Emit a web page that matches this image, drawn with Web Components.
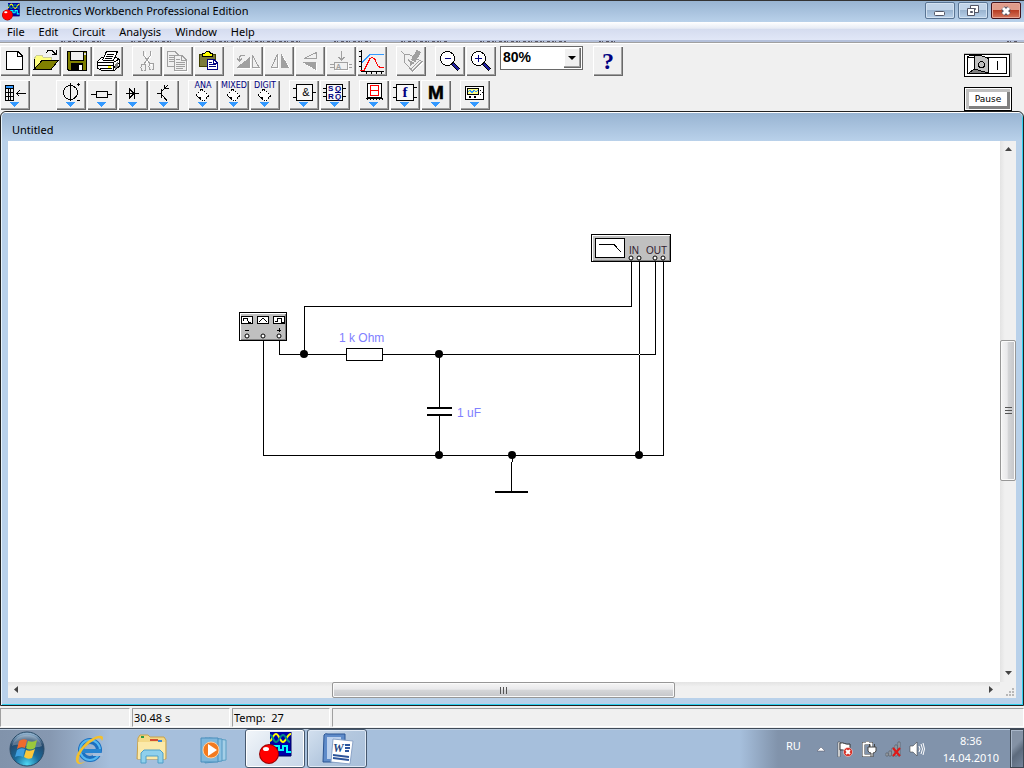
<!DOCTYPE html>
<html lang="en">
<head>
<meta charset="utf-8">
<title>Electronics Workbench Professional Edition</title>
<style>
    html, body {
        margin: 0;
        height: 100%;
    }
    body {
        display: flex;
        flex-direction: column;
        overflow: hidden;
        background: #f0f0f0;
        color: #000;
        font: 11px/16px "Noto Sans", "Open Sans", sans-serif;
    }
    doc-window {
        flex: 1;
    }
</style>
</head>
<body>
    <title-bar>Electronics Workbench Professional Edition</title-bar>
    <menu-bar>
        <menu-item>File</menu-item>
        <menu-item>Edit</menu-item>
        <menu-item>Circuit</menu-item>
        <menu-item>Analysis</menu-item>
        <menu-item>Window</menu-item>
        <menu-item>Help</menu-item>
    </menu-bar>
    <tool-area>
        <tool-row>
            <tool-group>
                <tool-button icon="new" label="New"></tool-button>
                <tool-button icon="open" label="Open"></tool-button>
                <tool-button icon="save" label="Save"></tool-button>
                <tool-button icon="print" label="Print"></tool-button>
            </tool-group>
            <tool-group>
                <tool-button icon="cut" label="Cut"></tool-button>
                <tool-button icon="copy" label="Copy"></tool-button>
                <tool-button icon="paste" label="Paste"></tool-button>
            </tool-group>
            <tool-group>
                <tool-button icon="rotate" label="Rotate"></tool-button>
                <tool-button icon="flipH" label="Flip horizontal"></tool-button>
                <tool-button icon="flipV" label="Flip vertical"></tool-button>
                <tool-button icon="subcircuit" label="Create subcircuit"></tool-button>
                <tool-button icon="graph" label="Display graphs"></tool-button>
            </tool-group>
            <tool-group>
                <tool-button icon="props" label="Component properties"></tool-button>
            </tool-group>
            <tool-group>
                <tool-button icon="zoomOut" label="Zoom out"></tool-button>
                <tool-button icon="zoomIn" label="Zoom in"></tool-button>
                <zoom-select></zoom-select>
            </tool-group>
            <tool-group>
                <tool-button icon="help" label="Help"></tool-button>
            </tool-group>
        </tool-row>
        <tool-row>
            <tool-group wide>
                <tool-button icon="favorites" label="Favorites" drop></tool-button>
            </tool-group>
            <tool-group>
                <tool-button icon="sources" label="Sources" drop></tool-button>
                <tool-button icon="basic" label="Basic" drop></tool-button>
                <tool-button icon="diodes" label="Diodes" drop></tool-button>
                <tool-button icon="transistors" label="Transistors" drop></tool-button>
            </tool-group>
            <tool-group>
                <tool-button icon="analog" label="Analog ICs" drop></tool-button>
                <tool-button icon="mixed" label="Mixed ICs" drop></tool-button>
                <tool-button icon="digital" label="Digital ICs" drop></tool-button>
            </tool-group>
            <tool-group>
                <tool-button icon="gates" label="Logic gates" drop></tool-button>
                <tool-button icon="flipflop" label="Digital" drop></tool-button>
            </tool-group>
            <tool-group>
                <tool-button icon="indicators" label="Indicators" drop></tool-button>
                <tool-button icon="controls" label="Controls" drop></tool-button>
                <tool-button icon="misc" label="Miscellaneous" drop></tool-button>
            </tool-group>
            <tool-group>
                <tool-button icon="instruments" label="Instruments" drop></tool-button>
            </tool-group>
        </tool-row>
        <power-switch slot="run"></power-switch>
        <pause-button slot="run">Pause</pause-button>
    </tool-area>
    <doc-window>
        <span slot="title">Untitled</span>
        <circuit-sheet></circuit-sheet>
    </doc-window>
    <status-bar>
        <status-cell></status-cell>
        <status-cell narrow>30.48 s</status-cell>
        <status-cell narrow>Temp:&nbsp; 27</status-cell>
        <status-cell fill></status-cell>
    </status-bar>
    <task-bar>
        <task-button icon="ie" label="Internet Explorer"></task-button>
        <task-button icon="explorer" label="Explorer"></task-button>
        <task-button icon="player" label="Media Player"></task-button>
        <task-button icon="workbench" label="Electronics Workbench" open current></task-button>
        <task-button icon="word" label="Word" open></task-button>
        <tray-area slot="tray"></tray-area>
    </task-bar>

<script>
const appIcon = `
    <rect x="11" width="21" height="24" fill="#0000a8"/>
    <path d="M11 24H32V0" fill="none" stroke="#000060"/>
    <path d="M11 9c2 0 3-7 6-7s4 8 7 8 4-8 8-8" fill="none" stroke="#ff0" stroke-width="2"/>
    <path d="M11 3c3 0 3 7 6 7s4-7 7-7 4 7 7 7" fill="none" stroke="#088" stroke-width="2"/>
    <path d="M15 13V18M16 20V14H20V18H24V14H28V20H32" fill="none" stroke="#0ff" stroke-width="2"/>
    <circle cx="10" cy="22" r="10" fill="#900"/>
    <circle cx="10" cy="22" r="9" fill="#f00"/>
    <ellipse cx="7" cy="17" rx="3" ry="2" fill="#fff"/>`;

// 30x30 drawings for the tool buttons
const toolIcons = {
    new: `<path d="M6.5 5.5H18L22.5 10V23.5H6.5Z" fill="#fff" stroke="#000"/><path d="M17.5 6V10.5H22" fill="none" stroke="#000"/>`,
    open: `<path d="M3.5 22V12L5.5 9.5H11L12.5 11.5H20.5V15" fill="#ffff80" stroke="#cc9"/>
        <path d="M3.5 23L11 14.5H27L20.5 23Z" fill="#808000" stroke="#000"/>
        <path d="M3.5 13V23" stroke="#000"/>
        <path d="M14.5 7.5L17 4.5H21L24.5 8M25.5 4V8.5H21" fill="none" stroke="#000"/>`,
    save: `<path d="M5.5 5.5H24.5V24.5H7L5.5 23Z" fill="#808000" stroke="#000"/>
        <path d="M8.5 5.5H21.5V14.5H8.5Z" fill="#efefef" stroke="#000"/>
        <path d="M9 17H21V25H9Z"/><path d="M17 19H20V24H17Z" fill="#fff"/><path d="M22 7H24V9H22Z" fill="#ddd"/>`,
    print: `<path d="M4.5 15.5L8.5 11.5H23L26.5 13.5V20L21.5 24.5H9L4.5 22Z" fill="#fff" stroke="#000"/>
        <path d="M9.5 14L13.5 5.5H24.5L20.5 14.5Z" fill="#fff" stroke="#000"/>
        <path d="M14 8.5H21M13 10.5H20M12 12.5H19" stroke="#000"/>
        <path d="M5 16.5H20.5L26 13M20.5 17V24M5 19.5H20M7 22.5H19M21 21.5L26 17" fill="none" stroke="#000"/>
        <path d="M15 20H18V22H15Z" fill="#ff0"/><path d="M22 18L25 15V20L22 23Z" fill="#808080"/>`,
    cut: `<g fill="none" stroke="#fff" transform="translate(1 1)"><path d="M12 5V9L19 19M18 5V9L12 19"/></g>
        <g fill="none" stroke="#a0a0a0"><path d="M11.5 5V9L18 18M18.5 5V9L12 18"/>
        <ellipse cx="11.5" cy="21.5" rx="2.5" ry="3.5"/><ellipse cx="19.5" cy="20.5" rx="2.5" ry="3.5"/></g>`,
    copy: `<g fill="#f0f0f0" stroke="#a0a0a0"><path d="M4.5 5.5H12L15.5 9V20.5H4.5Z"/><path d="M6 9.5H11M6 11.5H12M6 13.5H11M6 15.5H12"/>
        <path d="M11.5 9.5H19L23.5 14V24.5H11.5Z"/><path d="M18.5 10V14.5H23M13 13.5H17M13 16.5H22M13 18.5H22M13 20.5H22M13 22.5H20"/></g>
        <path d="M24.5 15V25.5H12" fill="none" stroke="#fff"/>`,
    paste: `<path d="M5.5 8.5H21.5V20.5H5.5Z" fill="#7b7b3a" stroke="#404000"/>
        <path d="M8.5 10.5V8L11 7L12.5 5.5H15L16.5 7L18.5 8V10.5Z" fill="#ff0" stroke="#000"/>
        <path d="M13.5 13.5H20L23.5 17V23.5H13.5Z" fill="#fff" stroke="#000080"/>
        <path d="M15 16.5H18M15 18.5H22M15 20.5H22M19.5 14V17.5H23" fill="none" stroke="#000080"/>`,
    rotate: `<path d="M4 23L18 13V23Z" fill="#fff"/><path d="M3 22L17 11V22Z" fill="#a0a0a0"/>
        <path d="M19.5 9L26 21.5H19.5Z" fill="none" stroke="#a0a0a0"/>
        <path d="M12 9.5H8L6.5 11V15M4 12.5L6.5 15L9 12.5" fill="none" stroke="#a0a0a0"/><path d="M20 22.5H27" stroke="#fff"/>`,
    flipH: `<path d="M13.5 8V21.5H7.5Z" fill="none" stroke="#a0a0a0"/><path d="M18 8V22H26Z" fill="#fff"/>
        <path d="M17 7V22H25Z" fill="#a0a0a0"/><path d="M8 22.5H14.5V9" fill="none" stroke="#fff"/>`,
    flipV: `<path d="M21.5 6.5V12.5H9Z" fill="none" stroke="#a0a0a0"/><path d="M8 17H22V25Z" fill="#fff"/>
        <path d="M7 16H21V24Z" fill="#a0a0a0"/>`,
    subcircuit: `<path d="M8.5 16.5H21.5V23.5H8.5ZM4 18.5H8M4 21.5H8M22 18.5H26M22 21.5H26M15.5 5V13M12.5 11L15.5 14L18.5 11" fill="none" stroke="#a0a0a0"/>
        <path d="M9 24.5H22.5V17" fill="none" stroke="#fff"/>
        <text x="10" y="23" font-size="7" font-weight="700" fill="#a0a0a0">A</text>`,
    graph: `<path d="M4.5 4V25.5H27M2 5.5H4M2 10.5H4M2 15.5H4M2 20.5H4M9.5 26V28M14.5 26V28M19.5 26V28M24.5 26V28" fill="none" stroke="#000"/>
        <path d="M5 16.5L13 8.5H27" fill="none" stroke="#39f"/>
        <path d="M3 24.5H7L13 12.5L15.5 11.5L18 13.5L21 20L23 21.5H27" fill="none" stroke="#f00"/>`,
    props: `<path d="M5.5 5.5L9 9M8.5 8.5H13L26 15.5L16.5 25L8.5 16.5Z" fill="none" stroke="#a0a0a0"/>
        <path d="M14 24L23 15M12 13L15 17" stroke="#a0a0a0"/>
        <path d="M23 5L17 15" stroke="#a0a0a0" stroke-width="5"/><path d="M15 15L14 20L19 17Z" fill="#a0a0a0"/>
        <path d="M27 16.5L17 26" stroke="#fff"/>`,
    zoomOut: `<path d="M17 17L24 24" stroke="#000" stroke-width="4"/><path d="M18 18L24 24" stroke="#2020a0" stroke-width="2"/>
        <circle cx="12.5" cy="12.5" r="7" fill="#fff" stroke="#000"/><path d="M10 12.5H16" stroke="#000080"/>`,
    zoomIn: `<path d="M17 17L24 24" stroke="#000" stroke-width="4"/><path d="M18 18L24 24" stroke="#2020a0" stroke-width="2"/>
        <circle cx="12.5" cy="12.5" r="7" fill="#fff" stroke="#000"/><path d="M9 12.5H16M12.5 9V16" stroke="#000080"/>`,
    help: `<text x="15" y="23" font-size="24" font-weight="700" fill="#000080" text-anchor="middle" font-family="Liberation Serif, serif">?</text>`,
    favorites: `<path d="M5 5H14V9H5Z" fill="#39f"/><path d="M5.5 5.5H13.5V20.5H5.5ZM5 8.5H14M5 12.5H14M5 16.5H14M8.5 9V20M10.5 9V20M16 13.5H26M19.5 10.5L16.5 13.5L19.5 16.5" fill="none" stroke="#000"/>`,
    sources: `<circle cx="14.5" cy="12.5" r="7" fill="none" stroke="#000"/><path d="M14.5 3V21M22.5 3V6M21 4.5H24M21 20.5H24" stroke="#000"/>`,
    basic: `<path d="M4 14.5H9M20 14.5H25M9.5 11.5H20.5V17.5H9.5Z" fill="none" stroke="#000"/>`,
    diodes: `<path d="M8 13.5H21M11.5 8V19M11.5 9L16 13.5L11.5 18M16.5 8V19" fill="none" stroke="#000"/>`,
    transistors: `<path d="M8 13.5H12M12.5 9V18M12.5 11.5L19 5M15 4.5L15.5 8.5L19.5 8.5M12.5 14.5L18 20.5" fill="none" stroke="#000"/>`,
    analog: chipIcon('ANA'),
    mixed: chipIcon('MIXED'),
    digital: chipIcon('DIGIT'),
    gates: `<path d="M7.5 4.5H23.5V20.5H7.5ZM4 8.5H7M4 17.5H7M24 12.5H27" fill="#f8f8f8" stroke="#000"/>
        <text x="17" y="16" font-size="11" text-anchor="middle">&amp;</text>`,
    flipflop: `<path d="M6.5 4.5H22.5V20.5H6.5ZM3 8.5H6M3 12.5H6M3 16.5H6M23 8.5H26M23 16.5H26" fill="#f8f8f8" stroke="#000"/>
        <g font-size="8" font-weight="700" fill="#000080"><text x="8" y="11">S</text><text x="15" y="11">Q</text><text x="8" y="19">R</text><text x="15" y="19">Q</text></g>
        <path d="M15 12.5H21" stroke="#000080"/>`,
    indicators: `<path d="M8.5 3.5H22.5V17.5H8.5Z" fill="#fff" stroke="#000"/><path d="M7 18.5H24M8.5 18V20M11.5 18V20M14.5 18V20M17.5 18V20M20.5 18V20M23.5 18V20" stroke="#000"/>
        <path d="M11.5 5.5H19.5V15.5H11.5ZM12 10.5H19" fill="none" stroke="#f00"/>`,
    controls: `<path d="M6.5 4.5H23.5V20.5H6.5ZM3 7.5H6M3 17.5H6M24 7.5H27M24 17.5H27" fill="#f8f8f8" stroke="#000"/>
        <text x="15" y="17" font-size="15" font-weight="700" fill="#000080" text-anchor="middle" font-family="Liberation Serif, serif">f</text>`,
    misc: `<text x="15" y="19" font-size="19" font-weight="700" stroke="#000" stroke-width=".6" text-anchor="middle">M</text>`,
    instruments: `<path d="M5.5 6.5H23.5V19.5H5.5Z" fill="#fff" stroke="#000"/><path d="M7.5 8.5H18.5V14.5H7.5Z" fill="#ff8" stroke="#000"/>
        <path d="M8 12L10 10L12 13L14 10L16 12L18 10" fill="none" stroke="#39f"/><path d="M9 16H11V18H9ZM14 16H16V18H14ZM20 10H21V11H20ZM20 14H21V15H20ZM22 12H23V13H22Z"/>`
};

function chipIcon(name) {
    return `<text x="15" y="8" font-size="8" fill="#000080" text-anchor="middle" font-family="DejaVu Sans, sans-serif">${name}</text>
        <path d="M13.5 9L21 15.5L15.5 21.5L8 15.5Z" fill="#fff"/>
        <path d="M13.5 9L21 15.5M21 15.5L15.5 21.5M15.5 21.5L8 15.5M8 15.5L13.5 9" stroke="#000" fill="none" stroke-dasharray="2 1"/>
        <path d="M11 17H13V19H11Z"/>`;
}

const taskIcons = {
    ie: `<circle cx="17" cy="18" r="9" fill="none" stroke="#1b6fc0" stroke-width="6"/>
        <circle cx="17" cy="18" r="10" fill="none" stroke="#55b8f0" stroke-width="2"/>
        <path d="M9 17H28V21H9Z" fill="#2684d0"/><path d="M20 21H30V24H20Z" fill="#a6bedb"/>
        <path d="M4 31C-1 25 12 7 25 4C30 3 31 5 29 9C28 5 24 6 20 9C10 15 4 25 6 30C8 32 12 30 14 28C10 32 6 33 4 31Z" fill="#f4c02c"/>`,
    explorer: `<path d="M3 6L5 3H13L15 5H29L31 8V27H2Z" fill="#f3d987" stroke="#c9a24a"/>
        <path d="M6 4H9V6H6Z" fill="#2b9b46"/><path d="M15 7H23V9H15Z" fill="#d34f32"/><path d="M23 8H27V10H23Z" fill="#3a87d0"/>
        <path d="M3 10H30V27H3Z" fill="#fbe9a9"/>
        <path d="M6 31V21L9 18H25L28 21V31H23V24H11V31Z" fill="#8fd0ec" stroke="#4f9fc8"/>`,
    player: `<path d="M12 6L29 8V28L12 30Z" fill="#a5cfe8" stroke="#5b9fc4"/><path d="M8 6L25 7V29L8 31Z" fill="#8dc2e2" stroke="#5598c2"/>
        <path d="M4 6H21V30H4Z" fill="#7fb7dc" stroke="#4a8ebc"/><circle cx="14" cy="18" r="8" fill="#f37a1f" stroke="#ffd0a0"/>
        <path d="M11 12L20 18L11 24Z" fill="#fff"/>`,
    workbench: appIcon,
    word: `<path d="M3 3Q4 1 7 2H24V30H2Z" fill="#5f8bc9" stroke="#2b5593"/><path d="M6 5H20V27H6Z" fill="#bcd1ee"/>
        <path d="M12 7L32 9L29 32L10 30Z" fill="#fff" stroke="#8ba4c8"/>
        <text x="12" y="20" font-size="12" font-weight="700" font-style="italic" fill="#23457f" font-family="Liberation Serif, serif">W</text>
        <path d="M24 13H29M24 16H29M24 19H28M12 23L28 25M12 26L28 28" stroke="#2c549b" stroke-width="2"/>`
};

// attaches an open shadow root and fills it from a template
function render(el, html) {
    const template = document.createElement('template');
    template.innerHTML = html;
    el.attachShadow({mode: 'open'}).appendChild(template.content.cloneNode(true));
}

class TitleBar extends HTMLElement {
    constructor() {
        super();
        render(this, `
            <style>
                :host {
                    display: flex;
                    align-items: center;
                    height: 22px;
                    box-sizing: border-box;
                    border-top: 1px solid #333;
                    padding: 0 3px 0 2px;
                    background: linear-gradient(#98b4d2, #b9d1ea);
                }
                .logo {
                    width: 18px;
                    height: 18px;
                    margin-right: 6px;
                }
                h1 {
                    flex: 1;
                    margin: 0;
                    padding-bottom: 2px;
                    font: inherit;
                }
                .buttons {
                    display: flex;
                    gap: 3px;
                    align-self: flex-start;
                    padding-top: 1px;
                }
                button {
                    width: 30px;
                    height: 17px;
                    padding: 0;
                    border: 1px solid #5a7594;
                    border-radius: 2px;
                    box-shadow: inset 0 0 0 1px #d2e1f1;
                    background: linear-gradient(#c0d3e8 45%, #9ab4d0 50%, #b8d0e9);
                }
                .close {
                    border-color: #43131c;
                    box-shadow: inset 0 0 0 1px #e8a798;
                    background: linear-gradient(#e09c8b 45%, #b83d24 50%, #d5755c);
                }
                svg {
                    display: block;
                    margin: auto;
                }
            </style>
            <svg class="logo" viewBox="0 0 33 33">${appIcon}</svg>
            <h1><slot></slot></h1>
            <div class="buttons">
                <button aria-label="Minimize"><svg width="14" height="12"><rect x="1.5" y="6.5" width="10" height="4" rx="1" fill="#fff" stroke="#535666"/></svg></button>
                <button aria-label="Restore"><svg width="14" height="13"><path d="M4.5 1.5H12.5V8.5H4.5ZM7.5 4.5H9.5V5.5H7.5Z" fill="#fff" stroke="#535666"/><path d="M1.5 4.5H8.5V11.5H1.5ZM4.5 7.5H6.5V8.5H4.5Z" fill="#fff" fill-rule="evenodd" stroke="#535666"/></svg></button>
                <button class="close" aria-label="Close"><svg width="14" height="12"><path d="M4 3L10 9M10 3L4 9" stroke="#535666" stroke-width="5"/><path d="M4 3L10 9M10 3L4 9" stroke="#fff" stroke-width="3"/></svg></button>
            </div>
        `);
    }
}
customElements.define('title-bar', TitleBar);

class MenuBar extends HTMLElement {
    constructor() {
        super();
        render(this, `
            <style>
                :host {
                    display: block;
                }
                nav {
                    display: flex;
                    align-items: flex-end;
                    height: 18px;
                    background: linear-gradient(#fff, #e8ecf5 35%, #d5dcef 40%, #e1e7f7);
                }
                svg {
                    display: block;
                    width: 100%;
                    height: 4px;
                    background: linear-gradient(#b4c0da 50%, #a0a0a0 50%, #a0a0a0 75%, #fff 75%);
                }
            </style>
            <nav><slot></slot></nav>
            <svg aria-hidden="true"><path d="M61 1.5H103M131 1.5H171M200 1.5H302M334 1.5H371M401 1.5H448M480 1.5H566M599 1.5H618M1007 1.5H1018" stroke="#556" stroke-dasharray="2 1 1 3 3 2"/></svg>
        `);
    }
}
customElements.define('menu-bar', MenuBar);

class MenuItem extends HTMLElement {
    constructor() {
        super();
        render(this, `
            <style>
                :host {
                    display: block;
                }
                button {
                    display: block;
                    border: 0;
                    padding: 0 7px;
                    background: none;
                    color: inherit;
                    font: inherit;
                }
            </style>
            <button><slot></slot></button>
        `);
    }
}
customElements.define('menu-item', MenuItem);

class ToolArea extends HTMLElement {
    constructor() {
        super();
        render(this, `
            <style>
                :host {
                    display: flex;
                    justify-content: space-between;
                    padding: 2px 12px 0 0;
                }
                .rows {
                    display: flex;
                    flex-direction: column;
                    gap: 4px;
                }
                .run {
                    display: flex;
                    flex-direction: column;
                    gap: 10px;
                    padding-top: 7px;
                }
            </style>
            <div class="rows"><slot></slot></div>
            <div class="run"><slot name="run"></slot></div>
        `);
    }
}
customElements.define('tool-area', ToolArea);

class ToolRow extends HTMLElement {
    constructor() {
        super();
        render(this, `
            <style>
                :host {
                    display: flex;
                    gap: 9px;
                }
            </style>
            <slot></slot>
        `);
    }
}
customElements.define('tool-row', ToolRow);

class ToolGroup extends HTMLElement {
    constructor() {
        super();
        render(this, `
            <style>
                :host {
                    display: flex;
                    gap: 1px;
                }
                :host([wide]) {
                    padding-right: 17px;
                }
            </style>
            <slot></slot>
        `);
    }
}
customElements.define('tool-group', ToolGroup);

class ToolButton extends HTMLElement {
    constructor() {
        super();
        const drop = this.hasAttribute('drop') ? '<path d="M10 22H19L14.5 27Z" fill="#39f"/>' : '';
        render(this, `
            <style>
                :host {
                    display: block;
                }
                button {
                    display: block;
                    width: 30px;
                    height: 30px;
                    padding: 0;
                    border: 0;
                    background: #f0f0f0;
                    box-shadow: inset 1px 1px #fff, inset -1px -1px #696969, inset -2px -2px #a0a0a0;
                }
                svg {
                    display: block;
                    font-family: "Liberation Sans", sans-serif;
                    shape-rendering: crispEdges;
                }
            </style>
            <button aria-label="${this.getAttribute('label')}">
                <svg width="30" height="30" viewBox="0 0 30 30">${toolIcons[this.getAttribute('icon')]}${drop}</svg>
            </button>
        `);
    }
}
customElements.define('tool-button', ToolButton);

class ZoomSelect extends HTMLElement {
    constructor() {
        super();
        render(this, `
            <style>
                :host {
                    display: grid;
                    width: 83px;
                    height: 24px;
                    margin: 0 1px 0 3px;
                }
                select, svg {
                    grid-area: 1 / 1;
                }
                select {
                    appearance: none;
                    width: 100%;
                    height: 100%;
                    padding: 0 0 2px 2px;
                    border: 1px solid #696969;
                    border-radius: 0;
                    background: #fff;
                    color: #000;
                    font: bold 14px "Liberation Sans", sans-serif;
                }
                svg {
                    justify-self: end;
                    margin: 2px;
                    pointer-events: none;
                }
            </style>
            <select aria-label="Zoom">
                <option>50%</option>
                <option selected>80%</option>
                <option>100%</option>
            </select>
            <svg width="17" height="20"><path d="M0 0H17V20H0Z" fill="#696969"/><path d="M0 0H16V19H0Z" fill="#a0a0a0"/><path d="M0 0H15V18H0Z" fill="#fff"/><path d="M1 1H15V18H1Z" fill="#f0f0f0"/><path d="M4 8H12L8 12Z"/></svg>
        `);
    }
}
customElements.define('zoom-select', ZoomSelect);

class PowerSwitch extends HTMLElement {
    constructor() {
        super();
        render(this, `
            <style>
                :host {
                    display: block;
                }
                button {
                    display: block;
                    padding: 0;
                    border: 0;
                    background: none;
                }
                svg {
                    display: block;
                    shape-rendering: crispEdges;
                }
            </style>
            <button aria-label="Activate simulation">
                <svg width="48" height="24">
                    <path d="M0 0H48V24H2Z" fill="#c0c0c0"/>
                    <path d="M.5 1.5H45.5V23.5H.5Z" fill="#fff" stroke="#000"/>
                    <path d="M3.5 4.5H42.5V20.5H3.5Z" fill="#fff" stroke="#000"/>
                    <path d="M10 2H17L24 5V20L18 19L10 16Z" fill="#c0c0c0"/>
                    <path d="M5 20L10 16L24 20Z" fill="#808080"/>
                    <path d="M3.5 4L6 2.5H17L24.5 5.5V20.5M10.5 3V16L4 20.5M10.5 16L24 20" fill="none" stroke="#000"/>
                    <circle cx="17.5" cy="11.5" r="3" fill="none" stroke="#000"/>
                    <path d="M33.5 8V17" stroke="#000"/>
                </svg>
            </button>
        `);
    }
}
customElements.define('power-switch', PowerSwitch);

class PauseButton extends HTMLElement {
    constructor() {
        super();
        render(this, `
            <style>
                :host {
                    display: block;
                }
                button {
                    display: block;
                    width: 48px;
                    height: 24px;
                    padding: 0;
                    border: 1px solid #000;
                    background: #fff;
                    box-shadow: inset 0 0 0 1px #fff, inset 4px 4px #c0c0c0, inset -4px -4px #808080;
                    color: #000;
                    font: 9px/20px "DejaVu Sans", sans-serif;
                }
            </style>
            <button><slot></slot></button>
        `);
    }
}
customElements.define('pause-button', PauseButton);

class DocWindow extends HTMLElement {
    constructor() {
        super();
        render(this, `
            <style>
                :host {
                    display: flex;
                    flex-direction: column;
                    min-height: 0;
                    box-sizing: border-box;
                    border: 1px solid #222;
                    border-radius: 6px 6px 0 0;
                    background: #b9d1ea;
                    box-shadow: inset 0 1px #fff, inset 1px 0 #e8f4fc, inset -1px -1px #2fd0ee;
                    padding: 0 7px 7px;
                }
                header {
                    height: 29px;
                    margin: 0 -6px;
                    padding-left: 10px;
                    box-sizing: border-box;
                    border-radius: 5px 5px 0 0;
                    background: linear-gradient(#fff 1px, #98b4d2 1px, #b9d1ea);
                    line-height: 35px;
                }
                .body {
                    flex: 1;
                    min-height: 0;
                    display: grid;
                    grid-template: minmax(0, 1fr) 16px / minmax(0, 1fr) 16px;
                    background: #f0f0f0;
                }
                .grip {
                    display: block;
                }
            </style>
            <header><slot name="title"></slot></header>
            <div class="body">
                <slot></slot>
                <scroll-bar vertical before="183" size="140" after="185"></scroll-bar>
                <scroll-bar before="309" size="341" after="310"></scroll-bar>
                <svg class="grip" width="16" height="16"><path d="M12 6H14V8H12ZM9 9H11V11H9ZM12 9H14V11H12ZM6 12H8V14H6ZM9 12H11V14H9ZM12 12H14V14H12Z" fill="#b8b8b8"/></svg>
            </div>
        `);
    }
}
customElements.define('doc-window', DocWindow);

class ScrollBar extends HTMLElement {
    constructor() {
        super();
        const vertical = this.hasAttribute('vertical');
        const grow = name => this.getAttribute(name);
        render(this, `
            <style>
                :host {
                    display: flex;
                    flex-direction: row;
                    background: linear-gradient(#e3e3e3, #f0f0f0 30%);
                }
                :host([vertical]) {
                    flex-direction: column;
                    background: linear-gradient(90deg, #e3e3e3, #f0f0f0 30%);
                }
                svg {
                    display: block;
                }
                .thumb {
                    display: grid;
                    place-items: center;
                    box-sizing: border-box;
                    border: 1px solid #979797;
                    border-radius: 2px;
                    background: linear-gradient(#f5f5f5, #e9e9eb 45%, #d5d6d8 50%, #c4c5c9);
                    box-shadow: inset 0 0 0 1px #fafafa;
                }
                :host([vertical]) .thumb {
                    background: linear-gradient(90deg, #f5f5f5, #e9e9eb 45%, #d5d6d8 50%, #c4c5c9);
                }
            </style>
            <svg width="16" height="16"><path d="${vertical ? 'M5 10H12L8.5 6Z' : 'M10 4V11L6 7.5Z'}" fill="#444"/></svg>
            <div style="flex: ${grow('before')}"></div>
            <div class="thumb" style="flex: ${grow('size')}">
                <svg width="7" height="7"><path d="${vertical ? 'M0 .5H7M0 3.5H7M0 6.5H7' : 'M.5 0V7M3.5 0V7M6.5 0V7'}" stroke="#555"/></svg>
            </div>
            <div style="flex: ${grow('after')}"></div>
            <svg width="16" height="16"><path d="${vertical ? 'M5 5H12L8.5 9Z' : 'M5 4V11L9 7.5Z'}" fill="#444"/></svg>
        `);
    }
}
customElements.define('scroll-bar', ScrollBar);

class CircuitSheet extends HTMLElement {
    constructor() {
        super();
        render(this, `
            <style>
                :host {
                    display: block;
                    background: #fff;
                    overflow: hidden;
                }
                svg {
                    display: block;
                    width: 100%;
                    height: 100%;
                    font-family: "Liberation Sans", sans-serif;
                }
                .crisp {
                    shape-rendering: crispEdges;
                }
                .wire {
                    fill: none;
                    stroke: #000;
                }
                .value {
                    font-size: 12px;
                    fill: #8080ff;
                }
                .port {
                    fill: #fff;
                    stroke: #000;
                }
            </style>
            <svg>
                <!-- wires -->
                <g class="wire crisp">
                    <path d="M623.5 121V165.5H296.5V213"/>
                    <path d="M271.5 200V213.5H338M375 213.5H647.5V121"/>
                    <path d="M255.5 200V314.5H655.5V121"/>
                    <path d="M631.5 121V213M631.5 214V314"/>
                    <path d="M431.5 213V266M431.5 275V314"/>
                    <path d="M504.5 314V321M503.5 321V350"/>
                    <path d="M419 267H444M419 274H444M487 351H520" stroke-width="2"/>
                    <path d="M338.5 207.5H374.5V219.5H338.5Z" fill="#fff"/>
                </g>
                <path d="M631 213H632V214H631Z" fill="#fff"/>
                <!-- junctions -->
                <circle cx="296" cy="213" r="4"/>
                <circle cx="431" cy="213" r="4"/>
                <circle cx="431" cy="314" r="4"/>
                <circle cx="504" cy="314" r="4"/>
                <circle cx="631" cy="314" r="4"/>
                <text class="value" x="331" y="201">1 k Ohm</text>
                <text class="value" x="449" y="276">1 uF</text>
                <!-- function generator -->
                <g class="crisp">
                    <path d="M231.5 171.5H278.5V199.5H231.5Z" fill="#c0c0c0" stroke="#000"/>
                    <path d="M232.5 199V172.5H278" fill="none" stroke="#fff"/>
                    <path d="M277.5 173V198.5H233" fill="none" stroke="#808080"/>
                    <path d="M233.5 175.5H244.5V182.5H233.5ZM249.5 175.5H260.5V182.5H249.5ZM265.5 175.5H276.5V182.5H265.5Z" fill="#fff" stroke="#000"/>
                    <path d="M235 180L236 177.5H239L240 180L241 181.5H243M251 181L255 177L259 181M267 180.5H269.5V177.5H273.5V181.5H276" fill="none" stroke="#000"/>
                    <path d="M237 189.5H241M269 189.5H273M271.5 187V191" stroke="#000"/>
                </g>
                <circle class="port" cx="239" cy="195" r="2"/>
                <circle class="port" cx="255" cy="195" r="2"/>
                <circle class="port" cx="271" cy="195" r="2"/>
                <!-- bode plotter -->
                <g class="crisp">
                    <path d="M583.5 93.5H662.5V120.5H583.5Z" fill="#c0c0c0" stroke="#000"/>
                    <path d="M584.5 120V94.5H662" fill="none" stroke="#fff"/>
                    <path d="M661.5 95V119.5H585" fill="none" stroke="#808080"/>
                    <path d="M587.5 97.5H616.5V116.5H587.5Z" fill="#fff" stroke="#000"/>
                    <path d="M591 103.5H606L613 111" fill="none" stroke="#000"/>
                </g>
                <text x="621" y="113" font-size="10" fill="#302030">IN</text>
                <text x="638" y="113" font-size="10" fill="#302030">OUT</text>
                <circle class="port" cx="623" cy="117" r="2"/>
                <circle class="port" cx="631" cy="117" r="2"/>
                <circle class="port" cx="647" cy="117" r="2"/>
                <circle class="port" cx="655" cy="117" r="2"/>
            </svg>
        `);
    }
}
customElements.define('circuit-sheet', CircuitSheet);

class StatusBar extends HTMLElement {
    constructor() {
        super();
        render(this, `
            <style>
                :host {
                    display: flex;
                    gap: 2px;
                    padding: 2px 0 1px;
                    background: #f0f0f0;
                }
            </style>
            <slot></slot>
        `);
    }
}
customElements.define('status-bar', StatusBar);

class StatusCell extends HTMLElement {
    constructor() {
        super();
        render(this, `
            <style>
                :host {
                    display: block;
                    box-sizing: border-box;
                    width: 130px;
                    height: 19px;
                    border: 1px solid;
                    border-color: #a0a0a0 #fff #fff #a0a0a0;
                    padding-left: 1px;
                    line-height: 18px;
                }
                :host([narrow]) {
                    width: 98px;
                }
                :host([fill]) {
                    flex: 1;
                }
            </style>
            <slot></slot>
        `);
    }
}
customElements.define('status-cell', StatusCell);

class TaskBar extends HTMLElement {
    constructor() {
        super();
        render(this, `
            <style>
                :host {
                    display: flex;
                    height: 40px;
                    box-sizing: border-box;
                    border-top: 1px solid #3f4a58;
                    background: linear-gradient(90deg, #8193ab, #8698b1 50px, #a6bfdc 110px, #a6bfdc calc(100% - 284px), #8193ab calc(100% - 246px));
                    box-shadow: inset 0 1px #bccde0;
                }
                .start {
                    width: 54px;
                    margin-right: 5px;
                    padding: 0;
                    border: 0;
                    background: none;
                }
                .start svg {
                    display: block;
                    margin: 0 auto;
                }
                .tasks {
                    flex: 1;
                    display: flex;
                    gap: 2px;
                }
            </style>
            <button class="start" aria-label="Start">
                <svg width="38" height="38">
                    <defs>
                        <radialGradient id="orb" cx=".5" cy=".95" r=".9">
                            <stop offset="0" stop-color="#4fd8f4"/>
                            <stop offset=".4" stop-color="#1a6c9c"/>
                            <stop offset=".8" stop-color="#24476b"/>
                            <stop offset="1" stop-color="#8fb0cc"/>
                        </radialGradient>
                    </defs>
                    <circle cx="19" cy="19" r="17" fill="url(#orb)" stroke="#294a66"/>
                    <path d="M4 16C8 1 30 1 34 16C25 20 13 12 4 16Z" fill="#fff" opacity=".25"/>
                    <path d="M11 11Q15 8 19 10L17 18Q13 16 9 19Z" fill="#ee6a2d"/>
                    <path d="M20 11Q25 13 29 10L27 18Q22 21 18 18Z" fill="#9ac83c"/>
                    <path d="M9 20Q13 17 17 19L15 27Q11 25 7 27Z" fill="#3f9fe0"/>
                    <path d="M18 20Q22 22 27 19L24 28Q20 30 16 27Z" fill="#fbc73a"/>
                </svg>
            </button>
            <div class="tasks"><slot></slot></div>
            <slot name="tray"></slot>
        `);
    }
}
customElements.define('task-bar', TaskBar);

class TaskButton extends HTMLElement {
    constructor() {
        super();
        render(this, `
            <style>
                :host {
                    display: block;
                }
                button {
                    width: 60px;
                    height: 39px;
                    padding: 0;
                    border: 1px solid transparent;
                    border-radius: 3px;
                    background: none;
                }
                :host([open]) button {
                    border-color: #46586e;
                    background: linear-gradient(135deg, #d3e0ef, #b3c7de 50%, #a8bfda);
                    box-shadow: inset 0 0 0 1px #dfe9f5;
                }
                :host([current]) button {
                    background: linear-gradient(135deg, #f2f6fa, #d5e0ed 60%, #c8d7e9);
                    box-shadow: inset 0 0 0 1px #fff;
                }
                svg {
                    display: block;
                    margin: 0 auto;
                }
            </style>
            <button aria-label="${this.getAttribute('label')}">
                <svg width="33" height="33" viewBox="0 0 33 33">${taskIcons[this.getAttribute('icon')]}</svg>
            </button>
        `);
    }
}
customElements.define('task-button', TaskButton);

class TrayArea extends HTMLElement {
    constructor() {
        super();
        render(this, `
            <style>
                :host {
                    display: flex;
                    align-items: center;
                    color: #fff;
                }
                .lang {
                    margin-right: 12px;
                    padding-bottom: 6px;
                }
                .icons {
                    display: flex;
                    align-items: center;
                    gap: 8px;
                    margin-right: 18px;
                }
                svg {
                    display: block;
                }
                time {
                    text-align: center;
                    margin-right: 11px;
                    line-height: 17px;
                }
                .desktop {
                    width: 14px;
                    height: 39px;
                    padding: 0;
                    border: 1px solid #3d4753;
                    box-shadow: inset 1px 1px #a9b7c9;
                    background: linear-gradient(135deg, #8492a5 40%, #5d6b7d 60%, #74849a);
                }
            </style>
            <span class="lang">RU</span>
            <div class="icons">
                <svg width="16" height="16"><path d="M4 10H12L8 6Z" fill="#fff" stroke="#556" stroke-width=".5"/></svg>
                <svg width="16" height="16">
                    <path d="M1 1H3V16H1Z" fill="#fff" stroke="#333" stroke-width=".5"/><path d="M3 2C7 1 8 4 13 3V10C8 11 7 8 3 9Z" fill="#fff" stroke="#333"/>
                    <circle cx="11" cy="11" r="4.5" fill="#d5281e" stroke="#fff" stroke-width=".5"/><path d="M9 9L13 13M13 9L9 13" stroke="#fff" stroke-width="2"/>
                </svg>
                <svg width="16" height="16">
                    <path d="M2.5 2.5H10.5V14.5H2.5ZM5 1.5H8" fill="none" stroke="#333" stroke-width="3"/><path d="M2.5 2.5H10.5V14.5H2.5ZM5 1.5H8" fill="none" stroke="#fff" stroke-width="2"/>
                    <path d="M7 6H15V10Q14 12 12 12V16H10V12Q8 12 7 10ZM8.5 3V6M13.5 3V6" fill="#fff" stroke="#444"/>
                </svg>
                <svg width="16" height="16">
                    <path d="M1 12H3V15H1ZM4 10H6V15H4ZM7 7H9V15H7ZM10 4H12V15H10ZM13 1H15V15H13Z" fill="#a7b0bb" stroke="#444" stroke-width=".5"/>
                    <path d="M8 7L15 15M15 7L8 15" stroke="#e01818" stroke-width="2"/>
                </svg>
                <svg width="16" height="16">
                    <path d="M1 5H4L8 1V15L4 11H1Z" fill="#fff" stroke="#333" stroke-width=".5"/><path d="M10 5Q12 8 10 11M12 3Q15 8 12 13M14 2Q17 8 14 14" fill="none" stroke="#fff"/>
                </svg>
            </div>
            <time datetime="2010-04-14T08:36">8:36<br>14.04.2010</time>
            <button class="desktop" aria-label="Show desktop"></button>
        `);
    }
}
customElements.define('tray-area', TrayArea);
</script>
</body>
</html>
